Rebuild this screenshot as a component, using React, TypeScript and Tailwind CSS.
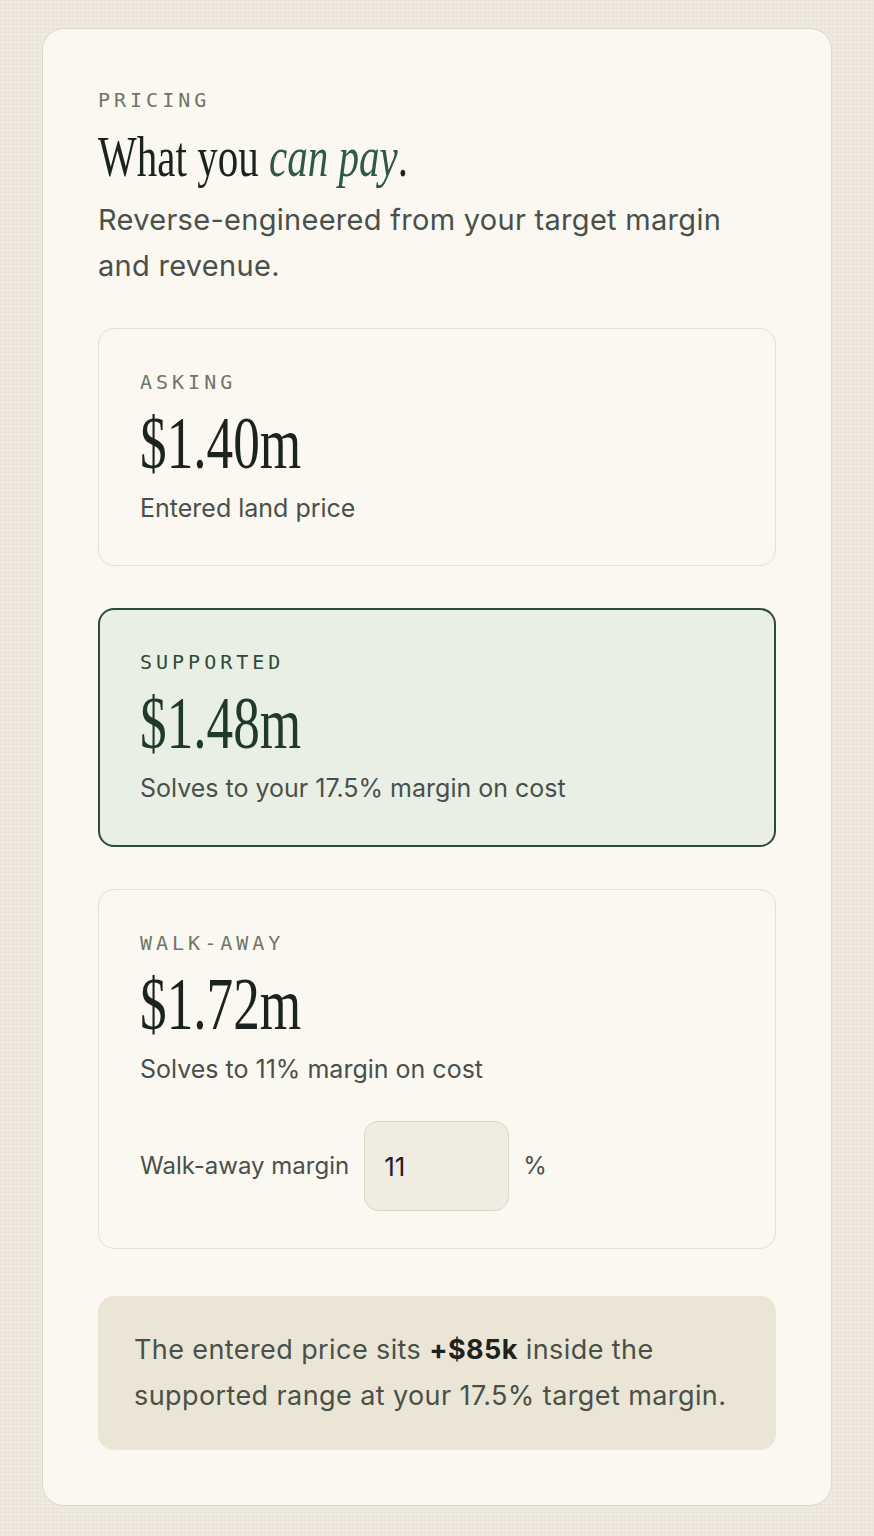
import React from "react";

const serif = "font-['Liberation_Serif','Times_New_Roman',serif]";
const sans = "font-['Inter','Liberation_Sans',sans-serif]";
const mono = "font-['DejaVu_Sans_Mono','Liberation_Mono',monospace]";

type PriceCardProps = {
  label: string;
  price: string;
  note: string;
  featured?: boolean;
  children?: React.ReactNode;
};

function PriceCard({ label, price, note, featured, children }: PriceCardProps) {
  const base = featured
    ? "rounded-[16px] border-2 border-[#2f4a38] bg-[#e9efe5] px-[40px] pt-[40px]"
    : "rounded-[16px] border border-[#e6e0cf] bg-[#faf8f1] px-[41px] pt-[41px]";
  return (
    <div className={`${base} ${children ? "pb-[37px]" : "pb-[41px]"}`}>
      <div
        className={`${mono} text-[20px] leading-[24px] tracking-[0.2em] ${
          featured ? "text-[#2f4a38]" : "text-[#6f7569]"
        }`}
      >
        {label}
      </div>
      <div className="mt-[11px] h-[75px]">
        <span
          className={`${serif} inline-block origin-left scale-x-[0.71] whitespace-nowrap text-[75px] leading-[75px] ${
            featured ? "text-[#1f3a2a]" : "text-[#1c231e]"
          }`}
        >
          {price}
        </span>
      </div>
      <div className={`${sans} mt-[12px] text-[25px] leading-[32px] text-[#4a5049]`}>{note}</div>
      {children}
    </div>
  );
}

export default function App() {
  return (
    <div className="min-h-[1536px] w-full bg-[#efebe0] bg-[image:linear-gradient(to_right,rgba(120,110,80,0.035)_1px,transparent_1px),linear-gradient(to_bottom,rgba(120,110,80,0.035)_1px,transparent_1px)] bg-[size:4px_4px] px-[42px] pb-[30px] pt-[28px]">
      <div className="rounded-[22px] border border-[#ddd8c8] bg-[#faf8f1] px-[55px] pb-[55px] pt-[59px]">
        <div className={`${mono} text-[20px] leading-[24px] tracking-[0.2em] text-[#6f7569]`}>PRICING</div>

        <div className="mt-[16px] h-[57px]">
          <h1
            className={`${serif} inline-block origin-left scale-x-[0.72] whitespace-nowrap text-[57px] leading-[57px] font-normal text-[#1c231e]`}
          >
            What you <em className="italic text-[#2e5a3e]">can pay</em>.
          </h1>
        </div>

        <p className={`${sans} mt-[12px] max-w-[640px] text-[29px] leading-[46px] tracking-[0.01em] text-[#4a5049]`}>
          Reverse-engineered from your target margin and revenue.
        </p>

        <div className="mt-[39px] flex flex-col gap-[42px]">
          <PriceCard label="ASKING" price="$1.40m" note="Entered land price" />
          <PriceCard
            featured
            label="SUPPORTED"
            price="$1.48m"
            note="Solves to your 17.5% margin on cost"
          />
          <PriceCard label="WALK-AWAY" price="$1.72m" note="Solves to 11% margin on cost">
            <div className={`${sans} mt-[36px] flex items-center text-[24px] text-[#4a5049]`}>
              <span className="leading-[32px]">Walk-away margin</span>
              <div className="ml-[15px] flex h-[90px] w-[145px] items-center rounded-[14px] border border-[#ddd8c6] bg-[#f0ece1] px-[19px] text-[26px] text-[#1c231e]">
                11
              </div>
              <span className="ml-[14px] leading-[32px]">%</span>
            </div>
          </PriceCard>

          <div className="mt-[5px] rounded-[16px] bg-[#ebe5d6] px-[36px] py-[31px]">
            <p className={`${sans} text-[27px] leading-[46px] tracking-[0.015em] text-[#4a5049]`}>
              The entered price sits <strong className="font-bold text-[#1c231e]">+$85k</strong> inside the
              supported range at your 17.5% target margin.
            </p>
          </div>
        </div>
      </div>
    </div>
  );
}
